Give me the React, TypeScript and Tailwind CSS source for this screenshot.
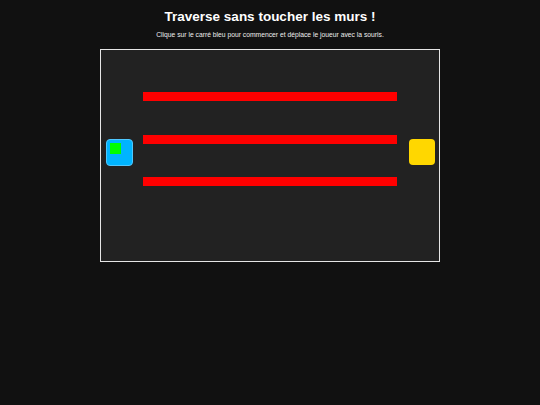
export default function App() {
  return (
    <div
      className="min-h-screen bg-[#111111] text-white flex flex-col items-center"
      style={{ fontFamily: '"Liberation Sans", Arial, sans-serif' }}
    >
      <h1 className="mt-[9px] text-[13.5px] leading-[15.5px] font-bold">Traverse sans toucher les murs !</h1>
      <p className="mt-[7.5px] text-[6.75px] leading-[6.75px] text-[#eeeeee]">
        Clique sur le carré bleu pour commencer et déplace le joueur avec la souris.
      </p>

      {/* game board */}
      <div className="mt-[10.5px] w-[340px] h-[213px] border border-[#e6e6e6] bg-[#222222] flex items-start">
        {/* start square with player */}
        <div className="ml-[5px] mt-[89px] w-[27px] h-[27px] shrink-0 rounded-[4px] bg-[#00b4ff] border border-[#4fc8ff] p-[3px]">
          <div className="w-[11px] h-[11px] bg-[#00ff00]" />
        </div>

        {/* walls */}
        <div className="ml-[10px] mt-[42px] w-[254px] shrink-0 flex flex-col gap-[33.5px]">
          <div className="h-[9px] bg-[#ff0000]" />
          <div className="h-[9px] bg-[#ff0000]" />
          <div className="h-[9px] bg-[#ff0000]" />
        </div>

        {/* goal */}
        <div className="ml-[12px] mt-[89px] w-[26px] h-[26px] shrink-0 rounded-[4px] bg-[#ffd700]" />
      </div>
    </div>
  )
}
